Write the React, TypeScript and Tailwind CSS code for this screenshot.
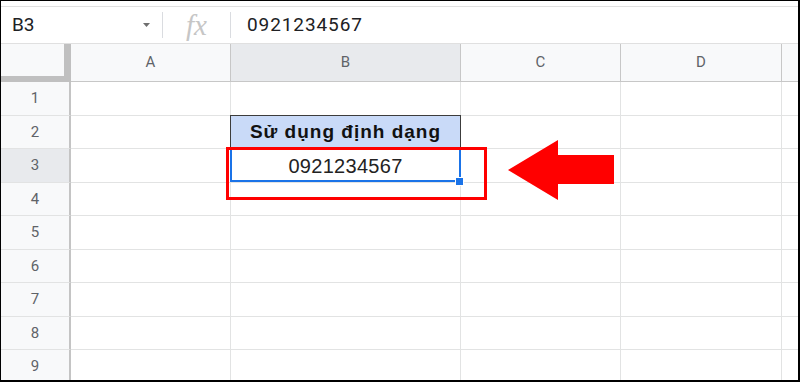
import React from "react";

// column widths incl. right gridline
const cols = [
  { key: "A", w: "w-[160px]" },
  { key: "B", w: "w-[230px]" },
  { key: "C", w: "w-[160px]" },
  { key: "D", w: "w-[161px]" },
];

const rowHeights = ["h-[34px]", "h-[33px]", "h-[34px]", "h-[33px]", "h-[34px]", "h-[33px]", "h-[34px]", "h-[33px]", "h-[34px]"];

function FormulaBar() {
  return (
    <div className="flex h-[38px] items-center border-t border-b border-[#e0e0e0] bg-white">
      {/* name box */}
      <div className="flex w-[161px] items-center pl-[11px] pr-[12px]">
        <span className="text-[19px] text-[#202124]" style={{ fontFamily: "Roboto, sans-serif" }}>
          B3
        </span>
        <svg className="ml-auto" width="7" height="4" viewBox="0 0 7 4">
          <polygon points="0,0 7,0 3.5,4" fill="#6f6f6f" />
        </svg>
      </div>
      <div className="h-[26px] w-px bg-[#dadce0]" />
      {/* fx */}
      <div className="flex w-[67px] items-center justify-center">
        <span className="text-[29px] italic leading-none text-[#c6c6c6]" style={{ fontFamily: "'Liberation Serif', serif" }}>
          fx
        </span>
      </div>
      <div className="h-[26px] w-px bg-[#dadce0]" />
      <span
        className="pl-[16px] text-[19px] tracking-[0.9px] text-[#202124]"
        style={{ fontFamily: "Roboto, sans-serif" }}
      >
        0921234567
      </span>
    </div>
  );
}

function HeaderRow() {
  return (
    <div className="flex h-[38px]">
      <div className="w-[70px] shrink-0 border-r-[7px] border-b-[6px] border-[#c0c0c0] bg-[#f8f9fa]" />
      {cols.map((c) => (
        <div
          key={c.key}
          className={`${c.w} flex shrink-0 items-center justify-center border-r border-b border-[#c7c7c7] text-[15px] text-[#5f6368] ${
            c.key === "B" ? "bg-[#e8eaed]" : "bg-[#f8f9fa]"
          }`}
        >
          {c.key}
        </div>
      ))}
      <div className="flex-1 border-b border-[#c7c7c7] bg-[#f8f9fa]" />
    </div>
  );
}

export default function App() {
  return (
    <div
      className="relative h-[382px] w-[800px] overflow-hidden border-t border-l border-r-2 border-b-2 border-black bg-white"
      style={{ fontFamily: "Roboto, sans-serif" }}
    >
      <div className="h-[5px]" />
      <FormulaBar />
      <HeaderRow />

      {/* GRID */}
      {rowHeights.map((h, i) => {
        const n = i + 1;
        return (
          <div key={n} className={`flex ${h}`}>
            <div
              className={`flex w-[70px] shrink-0 items-center justify-center border-r-2 border-b border-r-[#c4c4c4] border-b-[#e2e3e3] text-[15px] text-[#5f6368] ${
                n === 3 ? "bg-[#e8eaed]" : "bg-[#f8f9fa]"
              }`}
            >
              {n}
            </div>
            {cols.map((c) => {
              const isHeader = c.key === "B" && n === 2;
              const isSel = c.key === "B" && n === 3;
              return (
                <div
                  key={c.key}
                  className={`${c.w} relative flex shrink-0 items-center justify-center border-r border-b border-[#e2e3e3] ${
                    isHeader ? "bg-[#c9daf8]" : "bg-white"
                  }`}
                  style={{ fontFamily: "'Liberation Sans', Arial, sans-serif" }}
                >
                  {isHeader && (
                    <>
                      <div className="absolute -top-px -left-px -right-px bottom-0 border border-b-0 border-[#3c3c3c]" />
                      <span className="relative text-[19px] font-bold tracking-[1px] text-[#111]">
                        Sử dụng định dạng
                      </span>
                    </>
                  )}
                  {isSel && (
                    <>
                      <div className="absolute -top-px -left-px right-[-1px] bottom-0 z-10 border-2 border-[#1a73e8]" />
                      <div className="absolute right-[-4px] bottom-[-4px] z-20 h-[9px] w-[9px] border border-white bg-[#1a73e8]" />
                      <span className="relative text-[20px] tracking-[0.3px] text-[#222]">0921234567</span>
                    </>
                  )}
                </div>
              );
            })}
            <div className="flex-1 border-b border-[#e2e3e3] bg-white" />
          </div>
        );
      })}

      {/* annotations */}
      <div className="absolute left-[225px] top-[146px] z-30 h-[53px] w-[261px] border-[3px] border-[#ff0000]" />
      <svg className="absolute left-[507px] top-[139px] z-30" width="107" height="61" viewBox="0 0 107 61">
        <polygon points="0,30 50,0 50,15 106,15 106,44 50,44 50,60" fill="#ff0000" />
      </svg>
    </div>
  );
}
